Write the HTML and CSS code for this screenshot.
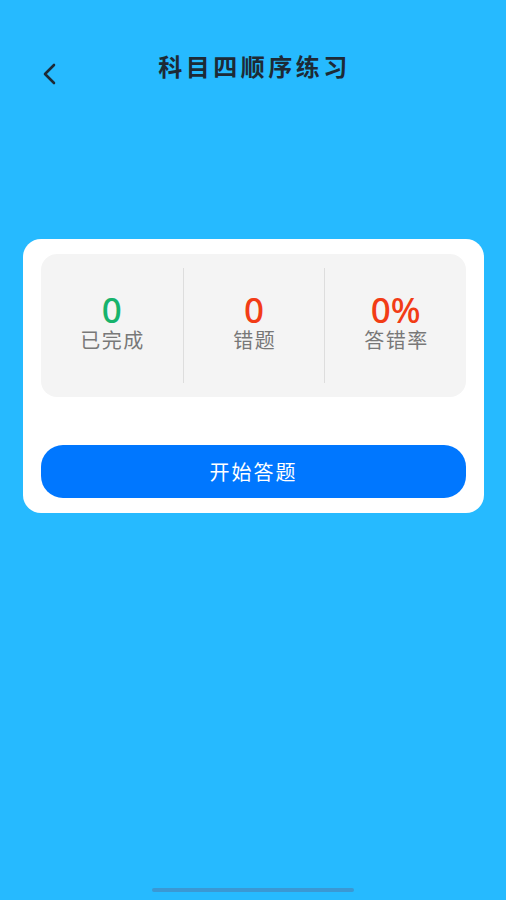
FILE: index.html
```html
<!DOCTYPE html>
<html lang="zh-CN">
<head>
  <meta charset="UTF-8"/>
  <meta name="viewport" content="width=device-width, initial-scale=1.0"/>
  <title>科目四顺序练习</title>
  <link rel="stylesheet" href="styles.css">
</head>
<body>
  <header class="topbar">
    <a class="back" href="#" aria-label="返回">
      <svg width="20" height="24" viewBox="0 0 20 24" aria-hidden="true">
        <path d="M14 3 L5 12 L14 21" fill="none" stroke="#1d2a36" stroke-width="2.6" stroke-linecap="round" stroke-linejoin="round"/>
      </svg>
    </a>
    <h1>科目四顺序练习</h1>
    <span></span>
  </header>

  <main>
    <section class="card">
      <div class="stats">
        <div class="stat">
          <div class="num green">0</div>
          <div class="label">已完成</div>
        </div>
        <div class="stat">
          <div class="num red">0</div>
          <div class="label">错题</div>
        </div>
        <div class="stat">
          <div class="num red">0%</div>
          <div class="label">答错率</div>
        </div>
      </div>
      <button class="start">开始答题</button>
    </section>
  </main>

  <div class="home-bar"></div>
</body>
</html>
```

FILE: styles.css
```css
:root {
  --sky: #26baff;
  --ink: #1d2a36;
  --panel: #f4f4f4;
  --line: #dddddd;
  --green: #16b36c;
  --red: #f23c16;
  --blue: #0077ff;
}
* { box-sizing:border-box; margin:0; padding:0; }
html, body { height:100%; }
body {
  display:flex; flex-direction:column; min-height:100vh;
  background:var(--sky);
  font-family:"Noto Sans","Noto Sans CJK SC",sans-serif;
  color:var(--ink);
}

/* —— Top bar —— */
.topbar {
  display:grid; grid-template-columns:1fr auto 1fr; align-items:start;
  padding:50px 40px 0; height:100px;
}
.back {
  display:flex; align-items:center; height:34px; margin-top:7px;
}
.topbar h1 {
  font-size:24px; font-weight:700; letter-spacing:3.5px;
  line-height:34px; color:var(--ink);
  margin-left:3px;
}

/* —— Card —— */
main { flex:1; padding:139px 22px 0 23px; }
.card {
  background:#fff; border-radius:18px;
  padding:15px 18px;
}
.stats {
  display:grid; grid-template-columns:repeat(3,1fr);
  background:var(--panel); border-radius:16px;
  padding:14px 0; height:143px;
}
.stat {
  display:flex; flex-direction:column; align-items:center; justify-content:center;
  border-left:1px solid var(--line);
  padding-bottom:6px;
}
.stat:first-child { border-left:none; }
.num {
  font-size:35px; font-weight:500; line-height:36px;
}
.num.green { color:var(--green); }
.num.red { color:var(--red); }
.label {
  font-size:20px; line-height:26px; color:#787878; letter-spacing:1.5px;
  margin-left:1.5px;
}

.start {
  display:block; width:100%; height:53px; margin-top:48px;
  border:none; border-radius:22px;
  background:var(--blue); color:#fff;
  font-family:inherit; font-size:20px; letter-spacing:2px;
  cursor:pointer;
}

/* —— Home indicator —— */
.home-bar {
  width:202px; height:4px; border-radius:2px;
  background:#3a98d4; margin:0 auto 8px;
}
```
